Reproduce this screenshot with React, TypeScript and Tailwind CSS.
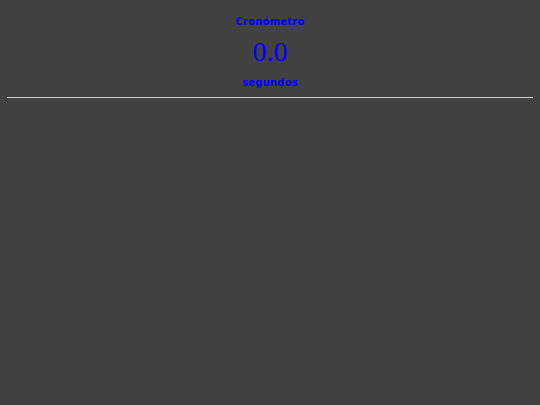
export default function App() {
  return (
    <div className="min-h-[405px] bg-[#414141]">
      <div className="flex flex-col items-center pt-[15px]">
        <h1 className="font-['DejaVu_Sans',sans-serif] text-[10px] font-bold leading-[13px] tracking-[0.2px] text-[#0000ff]">Cronómetro</h1>
        <div className="mt-[8px] font-['Liberation_Serif',serif] text-[28px] leading-[32px] text-[#0000ff]">0.0</div>
        <p className="mt-[8px] font-['DejaVu_Sans',sans-serif] text-[10px] font-bold leading-[14px] tracking-[0.2px] text-[#0000ff]">segundos</p>
      </div>
      <hr className="mx-[7px] mt-[7px] border-t border-[#d0d0d0]" />
    </div>
  );
}
